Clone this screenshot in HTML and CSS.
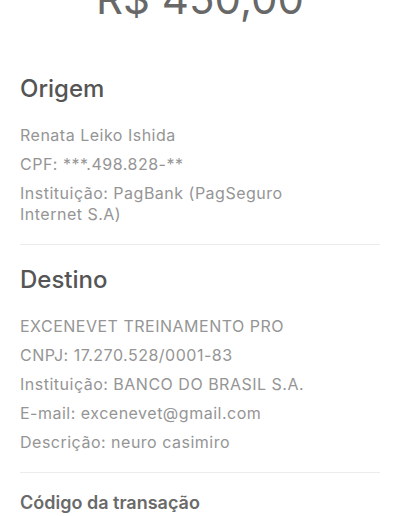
FILE: index.html
```html
<!DOCTYPE html>
<html lang="pt-BR">
<head>
    <meta charset="UTF-8">
    <meta name="viewport" content="width=device-width, initial-scale=1.0">
    <title>Comprovante</title>
    <link rel="stylesheet" href="styles.css">
</head>
<body>
    <div class="receipt">
        <div class="amount">R$ 450,00</div>

        <section class="party">
            <h2>Origem</h2>
            <ul class="details">
                <li>Renata Leiko Ishida</li>
                <li>CPF: ***.498.828-**</li>
                <li>Instituição: PagBank (PagSeguro<br>Internet S.A)</li>
            </ul>
        </section>

        <section class="party">
            <h2>Destino</h2>
            <ul class="details">
                <li>EXCENEVET TREINAMENTO PRO</li>
                <li>CNPJ: 17.270.528/0001-83</li>
                <li>Instituição: BANCO DO BRASIL S.A.</li>
                <li>E-mail: excenevet@gmail.com</li>
                <li>Descrição: neuro casimiro</li>
            </ul>
        </section>

        <section class="code">
            <h3>Código da transação</h3>
        </section>
    </div>
</body>
</html>
```

FILE: styles.css
```css
/* General Styles */
body {
    font-family: 'Inter', 'Noto Sans', sans-serif;
    margin: 0;
    background-color: #fff;
    overflow: hidden;
}

.receipt {
    padding: 0 20px;
}

/* Amount */
.amount {
    margin-top: -27px;
    font-size: 42px;
    line-height: 52px;
    text-align: center;
    color: #686868;
}

/* Sections */
.party {
    padding: 50px 0 19px;
    border-bottom: 1px solid #ececec;
}

.party + .party {
    padding-top: 21px;
}

.party h2 {
    margin: 0 0 22px;
    font-size: 24px;
    line-height: 28px;
    font-weight: 500;
    color: #555;
}

.details {
    list-style: none;
    margin: 0;
    padding: 0;
    display: flex;
    flex-direction: column;
    gap: 8px;
}

.details li {
    font-size: 16px;
    line-height: 21px;
    letter-spacing: 0.5px;
    color: #959595;
}

.code {
    padding-top: 19px;
}

.code h3 {
    margin: 0;
    font-size: 18px;
    line-height: 22px;
    font-weight: 600;
    color: #6a6a6a;
}
```
